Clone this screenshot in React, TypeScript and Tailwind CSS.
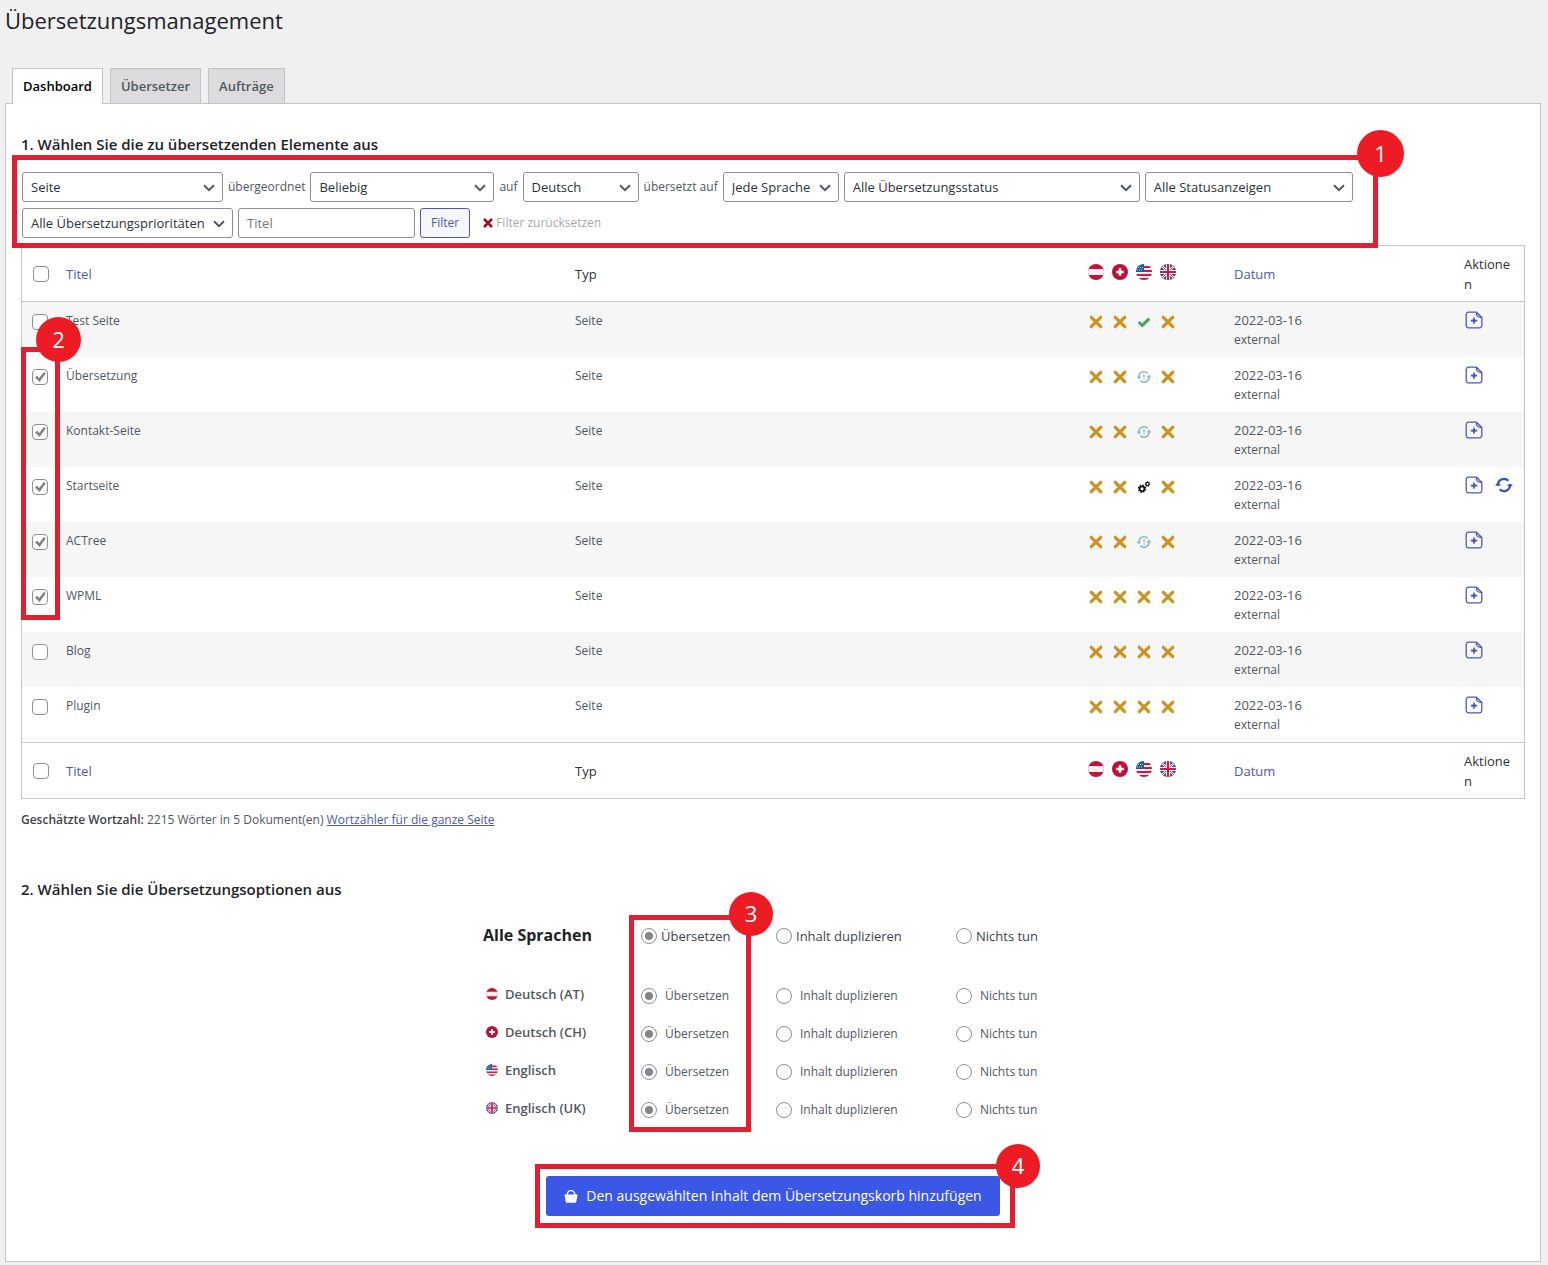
import React, { useId, useState } from 'react';

type FlagCode = 'at' | 'ch' | 'us' | 'uk';
type Status = 'none' | 'done' | 'update' | 'progress';

interface Doc {
  title: string;
  statuses: Status[];
  checked: boolean;
  canSync?: boolean;
}

const DOCS: Doc[] = [
  { title: 'Test Seite', statuses: ['none', 'none', 'done', 'none'], checked: false },
  { title: 'Übersetzung', statuses: ['none', 'none', 'update', 'none'], checked: true },
  { title: 'Kontakt-Seite', statuses: ['none', 'none', 'update', 'none'], checked: true },
  { title: 'Startseite', statuses: ['none', 'none', 'progress', 'none'], checked: true, canSync: true },
  { title: 'ACTree', statuses: ['none', 'none', 'update', 'none'], checked: true },
  { title: 'WPML', statuses: ['none', 'none', 'none', 'none'], checked: true },
  { title: 'Blog', statuses: ['none', 'none', 'none', 'none'], checked: false },
  { title: 'Plugin', statuses: ['none', 'none', 'none', 'none'], checked: false },
];

const LANGUAGES: { code: FlagCode; name: string }[] = [
  { code: 'at', name: 'Deutsch (AT)' },
  { code: 'ch', name: 'Deutsch (CH)' },
  { code: 'us', name: 'Englisch' },
  { code: 'uk', name: 'Englisch (UK)' },
];

const ACTIONS = ['Übersetzen', 'Inhalt duplizieren', 'Nichts tun'];

const Flag: React.FC<{ code: FlagCode; className: string }> = ({ code, className }) => {
  const id = useId();
  return (
    <svg viewBox="0 0 16 16" className={className} aria-hidden="true">
      <clipPath id={id}>
        <circle cx="8" cy="8" r="8" />
      </clipPath>
      <g clipPath={`url(#${id})`}>
        {code === 'at' && (
          <>
            <rect width="16" height="16" fill="#c3143c" />
            <rect y="5" width="16" height="6" fill="#fbeef1" />
          </>
        )}
        {code === 'ch' && (
          <>
            <rect width="16" height="16" fill="#bf0f36" />
            <path d="M8 4.2v7.6M4.2 8h7.6" stroke="#fff" strokeWidth="2.6" />
          </>
        )}
        {code === 'us' && (
          <>
            <rect width="16" height="16" fill="#f6edf0" />
            <path d="M0 3h16M0 7h16M0 11h16M0 15h16" stroke="#c41e45" strokeWidth="2" />
            <rect width="8" height="8" fill="#1d5a9c" />
            <path d="M2 3.5h5M1 6h6" stroke="#c9dbee" strokeWidth="1" strokeDasharray="1 1" />
          </>
        )}
        {code === 'uk' && (
          <>
            <rect width="16" height="16" fill="#2b3f86" />
            <path d="M0 0l16 16M16 0L0 16" stroke="#f3eff5" strokeWidth="2.4" />
            <path d="M0 0l16 16M16 0L0 16" stroke="#c41e45" strokeWidth="0.8" />
            <path d="M8 0v16M0 8h16" stroke="#f3eff5" strokeWidth="4.2" />
            <path d="M8 0v16M0 8h16" stroke="#c41e45" strokeWidth="2.2" />
          </>
        )}
      </g>
    </svg>
  );
};

const StatusIcon: React.FC<{ status: Status }> = ({ status }) => (
  <svg viewBox="0 0 16 16" className="size-4" fill="none" aria-hidden="true">
    {status === 'none' && (
      <path d="M3.3 3.3l9.4 9.4M12.7 3.3L3.3 12.7" stroke="#cc9320" strokeWidth="3.2" strokeLinecap="round" />
    )}
    {status === 'done' && <path d="M2.6 8l3.7 3.4 7-6.8" stroke="#4fa35c" strokeWidth="3" />}
    {status === 'update' && (
      <g stroke="#8dbdc6" strokeWidth="1.6">
        <path d="M3 8.500A5 5 0 0 1 11.600 4.400M13 7.500A5 5 0 0 1 4.400 11.600" />
        <path d="M8 5.200v3.200M8 9.600v1.200" strokeWidth="1.400" />
        <path d="M.6 7.600h4.800L3 10.600zM10.600 8.400h4.800L13 5.400z" fill="#8dbdc6" stroke="none" />
      </g>
    )}
    {status === 'progress' && (
      <g stroke="#111">
        <circle cx="6" cy="9.8" r="2.4" strokeWidth="1.7" />
        <circle cx="6" cy="9.8" r="3.6" strokeWidth="1.3" strokeDasharray="1.5 1.32" />
        <circle cx="11.5" cy="5" r="1.6" strokeWidth="1.2" />
        <circle cx="11.5" cy="5" r="2.4" strokeWidth="1" strokeDasharray="1 .88" />
      </g>
    )}
  </svg>
);

const AddNoteIcon = () => (
  <svg viewBox="0 0 18 18" className="size-[18px]" fill="none" stroke="#4b58b5" aria-hidden="true">
    <path
      d="M11.5 1.2H3.4A2.2 2.2 0 0 0 1.2 3.4v11.2a2.2 2.2 0 0 0 2.2 2.2h11.2a2.2 2.2 0 0 0 2.2-2.2V6.5z"
      strokeWidth="1.3"
      strokeLinejoin="round"
    />
    <path d="M11.5 1.4c-.8 3 1.6 5.4 5 4.9" strokeWidth="1.2" />
    <path d="M9 6.4v6.4M5.8 9.6h6.4" strokeWidth="1.6" />
    <circle cx="9" cy="9.6" r="1" strokeWidth="1.4" />
  </svg>
);

const SyncIcon = () => (
  <svg viewBox="0 0 18 18" className="size-[18px]" fill="none" stroke="#3f51b0" aria-hidden="true">
    <path d="M3 10A6.1 6.1 0 0 1 13.4 4.8M15 8A6.1 6.1 0 0 1 4.6 13.2" strokeWidth="2.2" />
    <path d="M0 9.6h6.2L3.100 6.200zM11.800 8.400H18l-3.100 3.400z" fill="#3f51b0" stroke="none" />
  </svg>
);

const BasketIcon = () => (
  <svg viewBox="0 0 14 14" className="size-[14px]" aria-hidden="true">
    <path d="M3 6.6C3.2 3.6 4.8 1.7 7 1.7s3.8 1.9 4 4.9" fill="none" stroke="#fff" strokeWidth="1.3" />
    <path d="M.4 5.6h13.2l-1.3 7.2a1.2 1.2 0 0 1-1.2 1H2.9a1.2 1.2 0 0 1-1.2-1z" fill="#fff" />
  </svg>
);

const Badge: React.FC<{ n: number; className: string }> = ({ n, className }) => (
  <span
    className={`absolute z-20 flex items-center justify-center rounded-full bg-[#ed1c24] pb-0.5 text-[22px] text-white ${className}`}
  >
    {n}
  </span>
);

const Select: React.FC<{ label: string; value: string; className: string }> = ({ label, value, className }) => (
  <span className={`relative block ${className}`}>
    <select
      aria-label={label}
      className="h-[30px] w-full appearance-none rounded-[3px] border border-[#8c8f94] bg-white pr-6 pl-2 text-[13px] text-[#2c3338]"
    >
      <option>{value}</option>
    </select>
    <svg viewBox="0 0 12 8" className="pointer-events-none absolute top-3 right-2 h-2 w-3" fill="none">
      <path d="M1 1.2l5 5 5-5" stroke="#50575e" strokeWidth="2" />
    </svg>
  </span>
);

const Checkbox: React.FC<{ label: string; checked: boolean; onChange: () => void }> = ({ label, checked, onChange }) => (
  <span className="relative block size-4">
    <input
      type="checkbox"
      aria-label={label}
      checked={checked}
      onChange={onChange}
      className="block size-4 appearance-none rounded-[4px] border border-[#8c8f94] bg-white"
    />
    {checked && (
      <svg viewBox="0 0 16 16" className="pointer-events-none absolute inset-0 size-4" fill="#7e8287">
        <path d="M3 8.4l2-1.6 2.2 2.3 4.7-6 1.9 1.2-6.2 8.8z" />
      </svg>
    )}
  </span>
);

const Radio: React.FC<{ name: string; label: string; checked: boolean; onChange: () => void; className: string }> = ({
  name,
  label,
  checked,
  onChange,
  className,
}) => (
  <label className={`flex items-center ${className}`}>
    <input
      type="radio"
      name={name}
      checked={checked}
      onChange={onChange}
      className="size-4 shrink-0 appearance-none rounded-full border border-[#8c8f94] bg-white bg-clip-content p-[3px] checked:bg-[#828589]"
    />
    {label}
  </label>
);

const HeadingCells: React.FC<{ allChecked: boolean; onToggle: () => void; border: string }> = ({
  allChecked,
  onToggle,
  border,
}) => {
  const cell = `${border} border-[#c3c4c7] pt-2 pb-[7px] text-left align-middle font-normal text-[#2c3338]`;
  return (
    <tr>
      <th className={`${cell} pl-[11px]`}>
        <Checkbox label="Alle auswählen" checked={allChecked} onChange={onToggle} />
      </th>
      <th className={`${cell} pl-[10px]`}>
        <a href="#titel" className="text-[#4b58b5]">Titel</a>
      </th>
      <th className={`${cell} pl-2`}>Typ</th>
      <th className={`${cell} pl-[10px]`}>
        <span className="flex gap-2 pb-[5px]">
          {LANGUAGES.map((l) => (
            <Flag key={l.code} code={l.code} className="size-4" />
          ))}
        </span>
      </th>
      <th className={`${cell} pl-[10px]`}>
        <a href="#datum" className="text-[#4b58b5]">Datum</a>
      </th>
      <th className={`${cell} pr-[10px] pl-[10px] break-all`}>Aktionen</th>
    </tr>
  );
};

const App: React.FC = () => {
  const [selected, setSelected] = useState<boolean[]>(DOCS.map((d) => d.checked));
  const [choices, setChoices] = useState<number[]>(LANGUAGES.map(() => 0));

  const allChecked = selected.every(Boolean);
  const toggleAll = () => setSelected(selected.map(() => !allChecked));
  const toggle = (i: number) => setSelected(selected.map((s, k) => (k === i ? !s : s)));

  return (
    <div className="min-h-screen bg-[#f0f0f1] pr-[7px] pb-[3px] pl-[5px] font-['Open_Sans','Noto_Sans',sans-serif] text-[13px] leading-5 text-[#50575e]">
      <h1 className="text-[22px] leading-10 text-[#1d2327]">Übersetzungsmanagement</h1>

      <nav className="relative z-10 mt-7 -mb-px flex gap-[7px] pl-[7px] font-semibold">
        <a href="#dashboard" className="h-9 border border-b-0 border-[#c3c4c7] bg-white px-[10px] leading-[35px] text-black">
          Dashboard
        </a>
        <a href="#uebersetzer" className="h-9 border border-[#c3c4c7] bg-[#dcdcde] px-[10px] leading-[35px]">
          Übersetzer
        </a>
        <a href="#auftraege" className="h-9 border border-[#c3c4c7] bg-[#dcdcde] px-[10px] leading-[35px]">
          Aufträge
        </a>
      </nav>

      <main className="border border-[#c3c4c7] bg-white px-[15px] pt-[30px] pb-[45px]">
        <h2 className="text-[15px] font-semibold text-[#1d2327]">1. Wählen Sie die zu übersetzenden Elemente aus</h2>

        <form className="relative mt-[18px] ml-px flex max-w-[1340px] flex-wrap items-center gap-x-[5px] gap-y-[6px] text-xs leading-5">
          <Select label="Typ" value="Seite" className="w-[201px]" />
          <span>übergeordnet</span>
          <Select label="Übergeordnet" value="Beliebig" className="w-[184px]" />
          <span>auf</span>
          <Select label="Ausgangssprache" value="Deutsch" className="w-[116px]" />
          <span>übersetzt auf</span>
          <Select label="Zielsprache" value="Jede Sprache" className="w-[116px]" />
          <Select label="Übersetzungsstatus" value="Alle Übersetzungsstatus" className="w-[296px]" />
          <Select label="Statusanzeige" value="Alle Statusanzeigen" className="w-[208px]" />
          <Select label="Priorität" value="Alle Übersetzungsprioritäten" className="w-[211px]" />
          <input
            type="text"
            aria-label="Titel"
            placeholder="Titel"
            className="h-[30px] w-[177px] rounded-[3px] border border-[#8c8f94] px-2 text-[13px] placeholder:text-[#757575]"
          />
          <button type="button" className="h-[30px] rounded-[3px] border border-[#4b58b5] bg-[#f6f7fb] px-[10px] text-[#4b58b5]">
            Filter
          </button>
          <button type="button" className="ml-2 flex items-center gap-[3px] text-[#a7aaad]">
            <svg viewBox="0 0 10 10" className="size-[10px]" stroke="#a00d1c" strokeWidth="2.6">
              <path d="M1 1l8 8M9 1L1 9" />
            </svg>
            Filter zurücksetzen
          </button>
          <span className="pointer-events-none absolute -top-[17px] -right-4 -bottom-[10px] -left-[10px] z-10 border-5 border-[#e02030]">
            <Badge n={1} className="-top-[30px] -right-[31px] size-[47px]" />
          </span>
        </form>

        <div className="relative mt-[7px]">
          <table className="w-full table-fixed border-separate border-spacing-0 border border-[#c3c4c7]">
            <colgroup>
              <col className="w-[34px]" />
              <col />
              <col />
              <col className="w-[146px]" />
              <col className="w-[230px]" />
              <col className="w-[70px]" />
            </colgroup>
            <thead>
              <HeadingCells allChecked={allChecked} onToggle={toggleAll} border="border-b" />
            </thead>
            <tbody>
              {DOCS.map((doc, i) => (
                <tr key={doc.title} className="align-top odd:bg-[#f6f6f6]">
                  <td className="pt-3 pl-[10px]">
                    <Checkbox label={doc.title} checked={selected[i]} onChange={() => toggle(i)} />
                  </td>
                  <td className="pt-[9px] pl-[10px] text-xs leading-5">{doc.title}</td>
                  <td className="pt-[9px] pl-2 text-xs leading-5">Seite</td>
                  <td className="pt-3 pl-[10px]">
                    <span className="flex gap-2">
                      {doc.statuses.map((s, k) => (
                        <StatusIcon key={k} status={s} />
                      ))}
                    </span>
                  </td>
                  <td className="pt-2 pb-[7px] pl-[10px]">
                    2022-03-16
                    <span className="block text-xs leading-5">external</span>
                  </td>
                  <td className="pt-[9px] pl-[11px]">
                    <span className="flex gap-3">
                      <button type="button" aria-label="Notiz hinzufügen">
                        <AddNoteIcon />
                      </button>
                      {doc.canSync && (
                        <button type="button" aria-label="Synchronisieren">
                          <SyncIcon />
                        </button>
                      )}
                    </span>
                  </td>
                </tr>
              ))}
            </tbody>
            <tfoot>
              <HeadingCells allChecked={allChecked} onToggle={toggleAll} border="border-t" />
            </tfoot>
          </table>
          <span className="pointer-events-none absolute top-[102px] left-0 h-[273px] w-[39px] border-5 border-[#e02030]">
            <Badge n={2} className="-top-[35px] left-[10px] size-[45px]" />
          </span>
        </div>

        <p className="mt-[11px] text-xs leading-5">
          <strong className="font-semibold text-[#3c434a]">Geschätzte Wortzahl:</strong> 2215 Wörter in 5 Dokument(en){' '}
          <a href="#wortzaehler" className="text-[#4b58b5] underline">
            Wortzähler für die ganze Seite
          </a>
        </p>

        <h2 className="mt-[49px] text-[15px] font-semibold text-[#1d2327]">2. Wählen Sie die Übersetzungsoptionen aus</h2>

        <div className="relative mx-auto mt-[17px] w-[580px]">
          <table className="w-full table-fixed">
            <colgroup>
              <col className="w-[158px]" />
              <col className="w-[135px]" />
              <col className="w-[180px]" />
              <col />
            </colgroup>
            <thead>
              <tr>
                <th className="h-[61px] pt-[7px] text-left align-top text-base font-bold text-[#1d2327]">Alle Sprachen</th>
                {ACTIONS.map((action, i) => (
                  <td key={action} className="pt-[10px] align-top">
                    <Radio
                      name="all"
                      label={action}
                      checked={choices.every((c) => c === i)}
                      onChange={() => setChoices(choices.map(() => i))}
                      className="gap-1 text-[#3c434a]"
                    />
                  </td>
                ))}
              </tr>
            </thead>
            <tbody>
              {LANGUAGES.map((lang, row) => (
                <tr key={lang.code} className="h-[38px]">
                  <th className="pb-1 text-left font-semibold">
                    <span className="flex items-center gap-[7px] pl-[3px]">
                      <Flag code={lang.code} className="size-3" />
                      {lang.name}
                    </span>
                  </th>
                  {ACTIONS.map((action, i) => (
                    <td key={action}>
                      <Radio
                        name={lang.code}
                        label={action}
                        checked={choices[row] === i}
                        onChange={() => setChoices(choices.map((c, k) => (k === row ? i : c)))}
                        className="gap-2 text-xs leading-5"
                      />
                    </td>
                  ))}
                </tr>
              ))}
            </tbody>
          </table>
          <span className="pointer-events-none absolute -top-px left-[146px] h-[217px] w-[122px] border-5 border-[#e02030]">
            <Badge n={3} className="-top-7 -right-[27px] size-11" />
          </span>
        </div>

        <div className="relative mx-auto mt-[47px] w-fit">
          <button
            type="button"
            className="flex h-10 w-[454px] items-center justify-center gap-2 rounded-[3px] bg-[#3b57e5] text-sm text-white"
          >
            <BasketIcon />
            Den ausgewählten Inhalt dem Übersetzungskorb hinzufügen
          </button>
          <span className="pointer-events-none absolute -top-3 -right-[15px] -bottom-3 -left-[11px] border-5 border-[#e02030]">
            <Badge n={4} className="-top-[25px] -right-[30px] size-11" />
          </span>
        </div>
      </main>
    </div>
  );
};

export default App;
